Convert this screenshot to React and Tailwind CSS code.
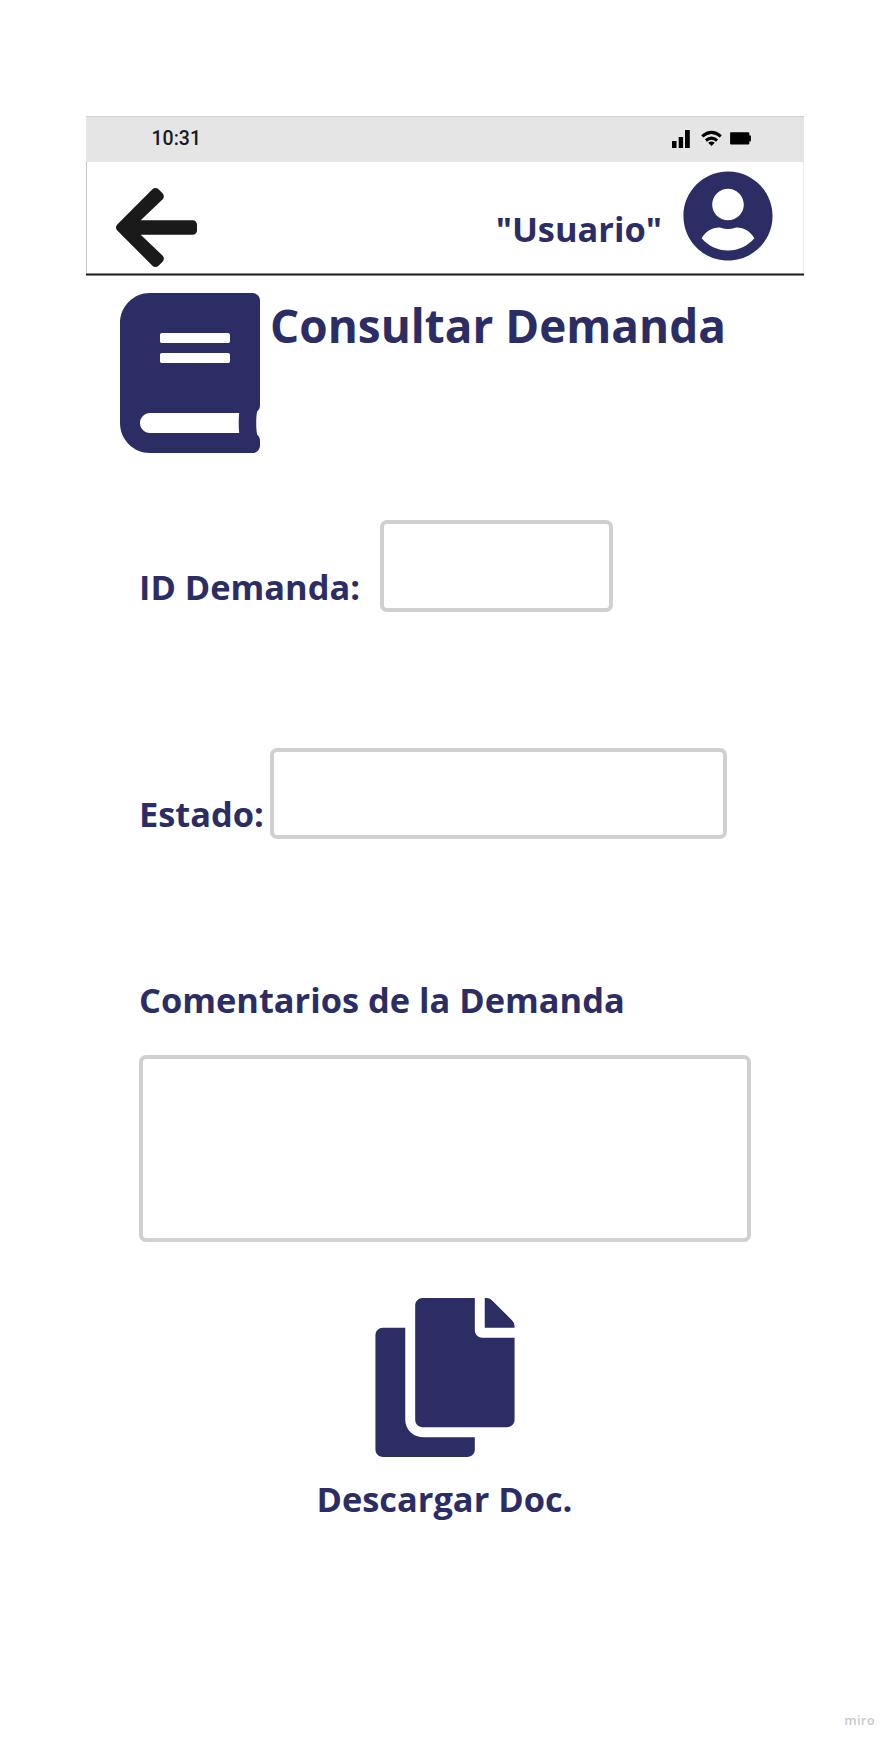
import { FaArrowLeft, FaBook, FaCopy, FaUserCircle } from "react-icons/fa";

const label = "whitespace-nowrap text-[34.4px] leading-[46px] font-bold";
const field = "box-border rounded-[7px] border-4 border-[#d0d0d0] bg-white";

function StatusBar() {
  return (
    <div className="flex h-[46px] items-start border-t border-[#cfcfcf] bg-[#e5e5e5] pr-[53px] pl-[65.5px]">
      <span className="mt-[11px] font-[Roboto,sans-serif] text-[19.5px] leading-[22px] font-medium text-[#1a1a1a]">10:31</span>
      <svg className="mt-[13px] ml-auto" width="80" height="20" viewBox="0 0 80 20">
        <path d="M1 11h4.5v7H1zM7.7 7h4.4v11H7.7zM14 0h4.8v18H14z" />
        <g fill="none" stroke="#000" strokeWidth="3">
          <path d="M31.2 6.4Q40.5-1.6 49.8 6.4" />
          <path d="M34.9 10.5Q40.5 5.7 46.1 10.5" />
        </g>
        <path d="M37.2 12.8Q40.5 10.3 43.8 12.8L40.5 16z" />
        <path d="M60 2.2h17.2q1.2 0 1.2 1.2v2.2h1.5v5.6h-1.5v2q0 1.2-1.2 1.2H60q-.9 0-.9-.9V3.1q0-.9.9-.9z" />
      </svg>
    </div>
  );
}

function Header() {
  return (
    <header>
      <div className="flex h-[111px] items-start border-r border-l border-r-[#ececec] border-l-[#c4c4c4] bg-white pr-[30px] pl-[29px]">
        <FaArrowLeft className="mt-[19px] h-[93px] w-[81px] text-[#1a1a1a]" />
        <span className="mt-[44px] mr-[21px] ml-auto whitespace-nowrap text-[34.4px] leading-[46px] font-bold">"Usuario"</span>
        <FaUserCircle className="mt-[8px] h-[92px] w-[90px]" />
      </div>
      <div className="h-[3px] border-y border-[#8b8b8b] bg-[#1a1a1a]" />
    </header>
  );
}

export default function App() {
  return (
    <div className="flex h-[1746px] w-[894px] flex-col bg-white pt-[116px] font-['Open_Sans',sans-serif] text-[#2b2d64]">
      <div className="ml-[86px] w-[718px]">
        <StatusBar />
        <Header />
      </div>
      <main className="flex flex-col">
        <div className="mt-[17px] flex h-[160px] items-start pl-[120px]">
          <FaBook className="h-[160px] w-[140px] shrink-0" />
          <h1 className="mt-[1px] ml-[10px] whitespace-nowrap text-[45.9px] leading-[62px] font-bold">Consultar Demanda</h1>
        </div>
        <div className="mt-[67px] flex h-[92px] items-start pl-[139px]">
          <span className={`${label} mt-[44px] w-[241px]`}>ID Demanda:</span>
          <div className={`${field} h-[92px] w-[233px]`} />
        </div>
        <div className="mt-[135px] flex h-[92px] items-start pl-[139px]">
          <span className={`${label} mt-[44px] w-[131px]`}>Estado:</span>
          <div className={`${field} mt-px h-[91px] w-[457px]`} />
        </div>
        <div className="mt-[138px] pl-[139px]">
          <div className={label}>Comentarios de la Demanda</div>
          <div className={`${field} mt-[32px] h-[187px] w-[612px]`} />
        </div>
        <div className="mt-[56px] flex flex-col pl-[316.5px]">
          <FaCopy className="ml-[58.5px] h-[159px] w-[140px]" />
          <span className={`${label} mt-[19px]`}>Descargar Doc.</span>
        </div>
      </main>
      <footer className="mt-auto mb-[17px] flex justify-end pr-[19px] text-[13px] leading-[18px] font-semibold tracking-[0.3px] text-[#c9c9d0]">miro</footer>
    </div>
  );
}
